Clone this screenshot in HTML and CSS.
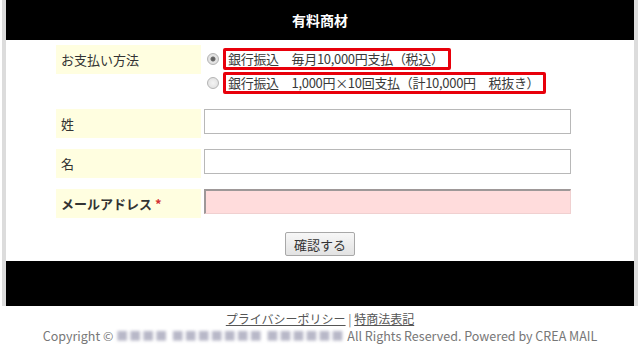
FILE: index.html
```html
<!DOCTYPE html>
<html lang="ja">

<head>
	<meta charset="utf-8">
	<meta name="viewport" content="width=device-width, initial-scale=1.0">
	<title>有料商材</title>
	<link rel="stylesheet" href="styles.css">
</head>

<body>
	<div id="wrap">
		<header class="top">
			<h1>有料商材</h1>
		</header>

		<form class="form" onsubmit="return false;">
			<div class="row">
				<div class="label">お支払い方法</div>
				<div class="field radios">
					<label class="choice">
						<input type="radio" name="pay" checked>
						<span class="mark">銀行振込　毎月10,000円支払（税込）</span>
					</label>
					<label class="choice">
						<input type="radio" name="pay">
						<span class="mark">銀行振込　1,000円×10回支払（計10,000円　税抜き）</span>
					</label>
				</div>
			</div>

			<div class="row">
				<div class="label">姓</div>
				<div class="field"><input type="text" class="txt"></div>
			</div>

			<div class="row">
				<div class="label">名</div>
				<div class="field"><input type="text" class="txt"></div>
			</div>

			<div class="row">
				<div class="label bold">メールアドレス <span class="req">*</span></div>
				<div class="field"><input type="text" class="txt pink"></div>
			</div>

			<div class="knap">
				<button type="submit">確認する</button>
			</div>
		</form>

		<div class="bund"></div>
	</div>

	<footer class="foot">
		<p class="links"><a href="#">プライバシーポリシー</a> | <a href="#">特商法表記</a></p>
		<p class="copy">Copyright © <span class="blur">■■■■ ■■■■■■■ ■■■■■■</span> All Rights Reserved. Powered by CREA MAIL</p>
	</footer>
</body>

</html>
```

FILE: styles.css
```css
*,
body * {
	box-sizing: border-box;
}

body {
	margin: 0;
	padding: 0;
	background-color: #ffffff;
	font-family: "Noto Sans CJK JP", "Liberation Sans", sans-serif;
	font-size: 13px;
	color: #333333;
}

#wrap {
	margin: 0 2px;
	border-left: 4px solid #dcdcdc;
	border-right: 4px solid #dcdcdc;
}

.top {
	background-color: #000000;
	height: 40px;
	display: flex;
	align-items: center;
	justify-content: center;
}

.top h1 {
	margin: 0;
	color: #ffffff;
	font-size: 14px;
	font-weight: bold;
}

.form {
	padding: 5px 0 0 50px;
}

.row {
	display: flex;
	gap: 3px;
	margin-bottom: 11px;
}

.label {
	width: 145px;
	height: 29px;
	line-height: 29px;
	padding-left: 5px;
	background-color: #fffee0;
	color: #333333;
	flex-shrink: 0;
}

.bold {
	font-weight: bold;
}

.req {
	color: #d33333;
}

.field {
	width: 367px;
}

.radios {
	display: flex;
	flex-direction: column;
	padding-top: 2px;
	padding-bottom: 3px;
}

.choice {
	display: flex;
	align-items: center;
	height: 24px;
	color: #3a3a3a;
}

/* gra radioknapper som i billedet */
.choice input {
	appearance: none;
	-webkit-appearance: none;
	margin: 0 4px 0 3px;
	width: 12px;
	height: 12px;
	border-radius: 50%;
	border: 1px solid #b4b4b4;
	background: radial-gradient(circle, #f4f4f4 0, #dcdcdc 100%);
	flex-shrink: 0;
}

.choice input:checked {
	background: radial-gradient(circle, #5a5a5a 0, #6a6a6a 2px, #e6e6e6 3px, #d8d8d8 100%);
}

.mark {
	border: 3px solid #e8000b;
	border-radius: 2px;
	padding: 0 4px 0 2px;
	line-height: 16px;
	white-space: nowrap;
	letter-spacing: -0.3px;
}

.txt {
	display: block;
	width: 367px;
	height: 25px;
	border: 1px solid #b8b8b8;
	background-color: #ffffff;
	font-size: 13px;
}

.pink {
	background-color: #ffdcdc;
	border-top: 2px solid #9e9898;
	border-left: 2px solid #9e9898;
	border-right: 1px solid #f0d0d0;
	border-bottom: 1px solid #f0d0d0;
}

.knap {
	text-align: center;
	margin-left: -50px;
	padding: 3px 0 5px;
}

.knap button {
	display: inline-block;
	vertical-align: top;
	font-family: "Noto Sans CJK JP", sans-serif;
	font-size: 13px;
	color: #333333;
	height: 24px;
	padding: 0 8px;
	background: linear-gradient(#f7f7f7, #e2e2e2);
	border: 1px solid #a8a8a8;
	border-radius: 2px;
}

.bund {
	background-color: #000000;
	height: 45px;
}

.foot {
	text-align: center;
	color: #777777;
	font-size: 12.5px;
	padding-top: 4px;
}

.foot p {
	margin: 0;
	line-height: 17px;
}

.links {
	font-size: 12px;
}

.links a {
	color: #555555;
}

.blur {
	color: #b8b8c8;
	filter: blur(1.5px);
	letter-spacing: 1px;
	font-size: 12px;
}
```
